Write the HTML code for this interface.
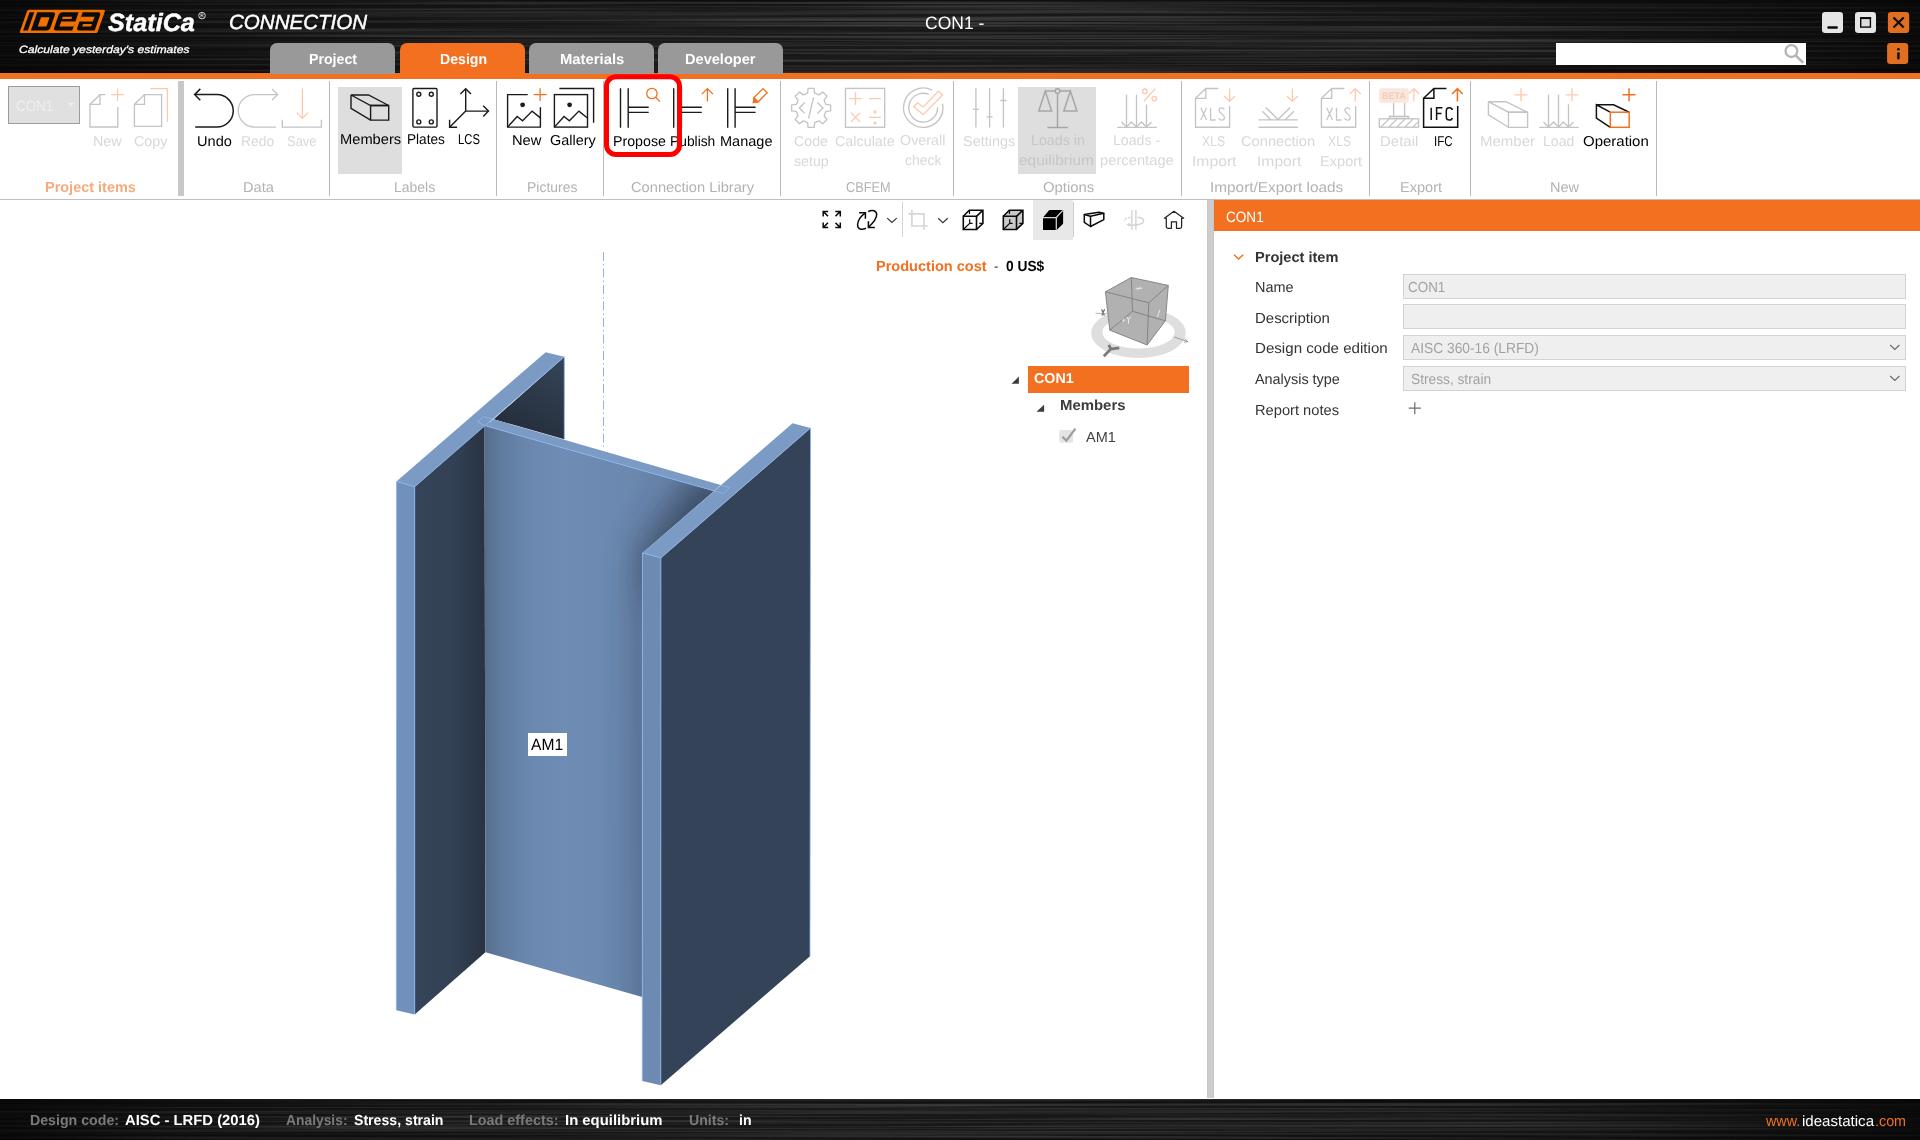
<!DOCTYPE html>
<html><head><meta charset="utf-8"><title>IDEA StatiCa Connection</title>
<style>
html,body{margin:0;padding:0;width:1920px;height:1140px;overflow:hidden;background:#fff;font-family:"Liberation Sans",sans-serif;}
.a{position:absolute;}
.ov{position:absolute;left:0;top:0;pointer-events:none;}
.t{position:absolute;white-space:nowrap;line-height:1;transform-origin:0 0;text-rendering:geometricPrecision;}
.t::before{content:'';display:inline-block;height:100px;width:0;}
#hdr{left:0;top:0;width:1920px;height:73px;background:linear-gradient(180deg,rgba(0,0,0,0.45) 0,rgba(0,0,0,0) 7px,rgba(0,0,0,0) 62px,rgba(0,0,0,0.4) 73px),linear-gradient(90deg,#080808 0,#0e0e0e 9%,#141414 22%,#181818 40%,#191919 50%,#181818 60%,#141414 78%,#0e0e0e 91%,#080808 100%);}
#obar{left:0;top:73px;width:1920px;height:6px;background:#f37021;}
#rib{left:0;top:79px;width:1920px;height:120px;background:#fff;}
#ribline{left:0;top:199px;width:1920px;height:1px;background:#bfbfbf;}
#stat{left:0;top:1099px;width:1920px;height:41px;background:linear-gradient(180deg,rgba(0,0,0,0.6) 0,rgba(0,0,0,0) 6px,rgba(0,0,0,0) 34px,rgba(0,0,0,0.4) 41px),linear-gradient(90deg,#080808 0,#0e0e0e 9%,#141414 22%,#171717 40%,#181818 50%,#171717 60%,#141414 78%,#0e0e0e 91%,#080808 100%);}
#split{left:1207px;top:200px;width:7px;height:898px;background:linear-gradient(90deg,#c2c2c2 0,#cdcdcd 1.2px,#cdcdcd 5.8px,#c2c2c2 7px);}
#phead{left:1214px;top:200px;width:706px;height:31px;background:#f37021;}
.tab{position:absolute;top:43px;width:125px;height:31px;border-radius:7px 7px 0 0;background:#999;}
.fld{position:absolute;left:1403px;width:503px;background:#efefef;border:1px solid #d3d3d3;box-sizing:border-box;}
.sep{position:absolute;top:81px;width:1px;height:115px;background:#b9b9b9;}
</style></head><body>
<div id="hdr" class="a"></div>
<svg class="a" style="left:0;top:0" width="1920" height="73" viewBox="0 0 1920 73"><defs>
<filter id="brush" x="0" y="0" width="100%" height="100%" color-interpolation-filters="sRGB"><feTurbulence type="fractalNoise" baseFrequency="0.0016 0.42" numOctaves="3" seed="11"/><feColorMatrix type="matrix" values="0 0 0 0 1  0 0 0 0 1  0 0 0 0 1  0.42 0 0 0 -0.155"/></filter>
<radialGradient id="hm" gradientUnits="userSpaceOnUse" cx="960" cy="40" r="1" gradientTransform="translate(960 40) scale(1060 120) translate(-960 -40)"><stop offset="0" stop-color="#fff"/><stop offset="0.55" stop-color="#bbb"/><stop offset="1" stop-color="#222"/></radialGradient>
<mask id="hmask"><rect width="1920" height="73" fill="url(#hm)"/></mask></defs>
<g mask="url(#hmask)"><rect width="1920" height="73" filter="url(#brush)"/></g></svg>
<div id="obar" class="a"></div>
<div id="rib" class="a"></div>
<div id="ribline" class="a"></div>
<div id="stat" class="a"></div>
<svg class="a" style="left:0;top:1099px" width="1920" height="41" viewBox="0 0 1920 41"><defs>
<filter id="brush2" x="0" y="0" width="100%" height="100%" color-interpolation-filters="sRGB"><feTurbulence type="fractalNoise" baseFrequency="0.0016 0.42" numOctaves="3" seed="5"/><feColorMatrix type="matrix" values="0 0 0 0 1  0 0 0 0 1  0 0 0 0 1  0.42 0 0 0 -0.155"/></filter>
<radialGradient id="hm2" gradientUnits="userSpaceOnUse" cx="960" cy="22" r="1" gradientTransform="translate(960 22) scale(1060 80) translate(-960 -22)"><stop offset="0" stop-color="#fff"/><stop offset="0.55" stop-color="#bbb"/><stop offset="1" stop-color="#222"/></radialGradient>
<mask id="hmask2"><rect width="1920" height="42" fill="url(#hm2)"/></mask></defs>
<g mask="url(#hmask2)"><rect width="1920" height="42" filter="url(#brush2)"/></g></svg>
<div id="split" class="a"></div>
<div id="phead" class="a"></div>
<div class="tab" style="left:270px"></div>
<div class="tab" style="left:400px;background:#f37021"></div>
<div class="tab" style="left:529px"></div>
<div class="tab" style="left:658px"></div>
<div class="a" style="left:178px;top:81px;width:6px;height:115px;background:#c8c8c8"></div>
<div class="sep" style="left:329px"></div>
<div class="sep" style="left:496px"></div>
<div class="sep" style="left:603px"></div>
<div class="sep" style="left:780px"></div>
<div class="sep" style="left:953px"></div>
<div class="sep" style="left:1181px"></div>
<div class="sep" style="left:1369px"></div>
<div class="sep" style="left:1470px"></div>
<div class="sep" style="left:1656px"></div>
<div class="a" style="left:338px;top:87px;width:64px;height:87px;background:#dedede"></div>
<div class="a" style="left:1018px;top:87px;width:78px;height:87px;background:#dedede"></div>
<div class="a" style="left:8px;top:86px;width:72px;height:38px;background:#e0e0e0;border:1px solid #9c9c9c;box-sizing:border-box"></div>
<div class="a" style="left:1556px;top:43px;width:250px;height:22px;background:#fff"></div>
<div class="a" style="left:1033px;top:200px;width:40px;height:40px;background:#e8e8e8"></div>
<div class="a" style="left:902px;top:202px;width:1px;height:35px;background:#d4d4d4"></div>
<div class="a" style="left:1028px;top:366px;width:161px;height:27px;background:#f37021"></div>
<div class="fld" style="top:274px;height:25px"></div>
<div class="fld" style="top:304px;height:25px"></div>
<div class="fld" style="top:335px;height:25px"></div>
<div class="fld" style="top:366px;height:25px"></div>
<svg class="ov" width="1920" height="1140" viewBox="0 0 1920 1140">
<defs>
<linearGradient id="gweb" gradientUnits="userSpaceOnUse" x1="484" y1="0" x2="643" y2="0">
 <stop offset="0" stop-color="#566c8c"/><stop offset="0.10" stop-color="#5f7a9d"/><stop offset="0.30" stop-color="#6b89b0"/><stop offset="0.5" stop-color="#6e8cb4"/><stop offset="0.8" stop-color="#6c8ab1"/><stop offset="1" stop-color="#6a86ad"/>
</linearGradient>
<linearGradient id="gshade" gradientUnits="userSpaceOnUse" x1="640" y1="560" x2="700" y2="490">
 <stop offset="0" stop-color="#3f4f68" stop-opacity="0"/><stop offset="0.45" stop-color="#3f4f68" stop-opacity="0.25"/><stop offset="1" stop-color="#3a4860" stop-opacity="0.85"/>
</linearGradient>
<linearGradient id="gleft" gradientUnits="userSpaceOnUse" x1="414" y1="0" x2="485" y2="0">
 <stop offset="0" stop-color="#354458"/><stop offset="0.55" stop-color="#334155"/><stop offset="1" stop-color="#283342"/>
</linearGradient>
<linearGradient id="gback" gradientUnits="userSpaceOnUse" x1="560" y1="360" x2="520" y2="440">
 <stop offset="0" stop-color="#354458"/><stop offset="1" stop-color="#232c39"/>
</linearGradient>
<clipPath id="cweb"><polygon points="484.6,425.6 714,490.9 642.5,553 642.3,997 485.4,952.2"/></clipPath>
<filter id="blur14" x="-50%" y="-50%" width="200%" height="200%"><feGaussianBlur stdDeviation="19"/></filter>
</defs>
<g id="hdricons">
<!-- IDEA logo -->
<g transform="translate(0,33.1) skewX(-19.2) translate(0,-33.1)">
<rect x="19.4" y="9.8" width="77.9" height="23.3" rx="1.5" fill="#f37000"/>
<rect x="22.3" y="12.3" width="4.7" height="18.3" fill="#0b0b0b"/>
<path d="M30,12.3 H45.5 Q48.6,12.3 48.6,15.3 V27.6 Q48.6,30.6 45.5,30.6 H30 Z" fill="#0b0b0b"/>
<rect x="35.5" y="17.2" width="8.6" height="9.2" fill="#f37000"/>
<path d="M55.3,12.3 H71.4 V21.5 H57.2 V23.9 H71.4 V26.4 H57.2 V23.9 H71.4 V30.6 H55.3 Q52.3,30.6 52.3,27.6 V15.3 Q52.3,12.3 55.3,12.3 Z" fill="#0b0b0b"/>
<rect x="57.1" y="16.7" width="9.4" height="2.4" fill="#f37000"/>
<rect x="57.1" y="23.9" width="14.3" height="2.5" fill="#f37000"/>
<path d="M75.4,12.3 H90.8 Q93.8,12.3 93.8,15.3 V30.6 H78.4 Q75.4,30.6 75.4,27.6 V21.4 H88.8 V19.1 H75.4 Z" fill="#0b0b0b"/>
<rect x="75.4" y="16.7" width="13.5" height="2.4" fill="#f37000"/>
<rect x="79.9" y="23.9" width="8.9" height="2.5" fill="#f37000"/>
</g>
<circle cx="202" cy="15.6" r="3.3" fill="none" stroke="#e6e6e6" stroke-width="0.9"/>
<path d="M200.9,17.3 V13.9 H202.3 Q203.2,13.9 203.2,14.8 Q203.2,15.6 202.3,15.6 H200.9 M202.3,15.6 L203.3,17.3" fill="none" stroke="#e6e6e6" stroke-width="0.7"/>
<!-- window buttons -->
<rect x="1822" y="12.1" width="21" height="20.8" rx="3.2" fill="#e6e6e6"/>
<rect x="1827.3" y="26.2" width="10.6" height="2.6" rx="1.2" fill="#0a0a0a"/>
<rect x="1855" y="12.1" width="21" height="20.8" rx="3.2" fill="#e6e6e6"/>
<rect x="1860.7" y="17.9" width="9.7" height="9.2" fill="#dcdcdc" stroke="#0a0a0a" stroke-width="1.4"/>
<rect x="1860" y="17.1" width="11.1" height="2" fill="#0a0a0a"/>
<rect x="1887.9" y="12.1" width="21.3" height="20.8" rx="3.2" fill="#e16f22"/>
<path d="M1893.5,17.6 L1903.7,27.5 M1903.7,17.6 L1893.5,27.5" stroke="#0a0a0a" stroke-width="2.1" fill="none"/>
<rect x="1887.1" y="43.1" width="21.1" height="20.9" rx="3.2" fill="#e16f22"/>
<rect x="1897.2" y="52.2" width="2.4" height="7.2" rx="1" fill="#0a0a0a"/>
<circle cx="1898.4" cy="49.2" r="1.3" fill="#0a0a0a"/>
<!-- search -->
<circle cx="1791.4" cy="51.1" r="5.9" fill="none" stroke="#b5b5b5" stroke-width="2.3"/>
<path d="M1795.6,55.4 L1803.2,62.8" stroke="#b5b5b5" stroke-width="2.6" fill="none"/>
</g>
<g id="rib1" fill="none" stroke-linecap="butt" stroke-linejoin="miter">
<!-- dropdown arrow -->
<polygon points="68,103 74.1,103 71.05,106.8" fill="#efefef" stroke="none"/>
<!-- New (disabled) -->
<g stroke="#c4c4c4" stroke-width="1.35">
<path d="M105.4,94.6 H100 L90,104.4 V127 H117.8 V107"/>
<path d="M100,94.6 V104.4 H90"/>
<path d="M144.5,94.6 H161.6 V126.3 H134.4 V104.4 Z"/>
<path d="M144.5,94.6 V104.4 H134.4"/>
</g>
<g stroke="#fbc9b0" stroke-width="1.3">
<path d="M111.2,94.7 H124 M117.5,88.4 V101"/>
<path d="M150.3,88.6 H167.4 V121.7"/>
</g>
<!-- Undo -->
<g stroke="#1a1a1a" stroke-width="1.5">
<path d="M195.2,127.1 H217 A16.25,16.25 0 0 0 217,94.6 H195"/>
<path d="M200.3,88.9 L194.6,94.6 L200.3,100.3"/>
</g>
<!-- Redo (disabled) -->
<g stroke="#c4c4c4" stroke-width="1.35">
<path d="M276,127.1 H254.5 A16.25,16.25 0 0 1 254.5,94.6 H277.3"/>
<path d="M272,88.9 L277.7,94.6 L272,100.3"/>
<path d="M282.3,119.7 V127.1 H321.4 V119.7"/>
</g>
<g stroke="#fbc9b0" stroke-width="1.3">
<path d="M302.4,88.5 V118.2 M296.8,112.8 L302.4,118.4 L308,112.8"/>
</g>
<!-- Members -->
<g stroke="#1a1a1a" stroke-width="1.4">
<path d="M351,95 H368.5 L388.7,105.5 H370.6 Z"/>
<path d="M370.6,105.5 H388.7 V120.1 H370.6 Z"/>
<path d="M351,95 V108.4 L370.6,120.1"/>
<!-- Plates -->
<rect x="412.9" y="88.5" width="24.1" height="38.6" rx="1"/>
<circle cx="418.8" cy="94.3" r="2"/><circle cx="431.3" cy="94.3" r="2"/>
<circle cx="418.8" cy="121.9" r="2"/><circle cx="431.3" cy="121.9" r="2"/>
<!-- LCS -->
<path d="M465.7,88.8 V111.1 H488.5 M465.7,111.1 L449.6,127.2"/>
<path d="M460.4,94.1 L465.7,88.8 L471,94.1 M483.2,105.8 L488.5,111.1 L483.2,116.4 M449.6,119.7 V127.2 H457.1"/>
<!-- Pictures New -->
<path d="M527.7,94.6 H507.6 V127.1 H540.4 V107.3"/>
<path d="M507.6,127.1 L517.2,116.5 L522.6,120.8 L532.1,111.1 L540.4,117.9"/>
<circle cx="522.6" cy="104.8" r="2.4" fill="#1a1a1a" stroke="none"/>
<!-- Gallery -->
<rect x="554.4" y="94.6" width="33.1" height="32.5"/>
<path d="M554.4,127.1 L564,116.5 L569.4,120.8 L578.9,111.1 L587.5,118"/>
<circle cx="569.6" cy="104.8" r="2.4" fill="#1a1a1a" stroke="none"/>
<path d="M559.4,88.5 H593.6 V122.7"/>
<!-- Propose / Publish / Manage -->
<path d="M620.5,88.2 V127.7 M628.2,88.2 V127.7 M628.2,107.2 H648.7 M628.2,112.4 H648.7"/>
<path d="M673.7,88.2 V127.7 M681.4,88.2 V127.7 M681.4,107.2 H701.8 M681.4,112.4 H701.8"/>
<path d="M727.7,88.2 V127.7 M735.1,88.2 V127.7 M735.1,107.2 H755.6 M735.1,112.4 H755.6"/>
</g>
<g stroke="#f37021" stroke-width="1.3">
<path d="M533.7,94.7 H546.6 M540.1,88.3 V101.1"/>
<circle cx="651.9" cy="93.5" r="5.2"/>
<path d="M655.6,97.2 L660,101.6"/>
<path d="M707.4,88.6 V101.6 M701.9,94.1 L707.4,88.6 L712.9,94.1"/>
<path d="M763.0,88.6 L767.2,92.8 L758.2,101.8 L753.4,102.4 L754.0,97.6 Z"/>
<path d="M754.0,97.6 L758.2,101.8 L753.4,102.4 Z" fill="#f37021"/>
</g>
</g>
<g id="rib2" fill="none">
<g stroke="#c4c4c4" stroke-width="1.35">
<path d="M807.6,93.1 L808.1,88.4 L814.1,88.4 L814.6,93.1 L819.1,94.9 L822.7,92.0 L827.0,96.3 L824.1,99.9 L825.9,104.4 L830.6,104.9 L830.6,110.9 L825.9,111.4 L824.1,115.9 L827.0,119.5 L822.7,123.8 L819.1,120.9 L814.6,122.7 L814.1,127.4 L808.1,127.4 L807.6,122.7 L803.1,120.9 L799.5,123.8 L795.2,119.5 L798.1,115.9 L796.3,111.4 L791.6,110.9 L791.6,104.9 L796.3,104.4 L798.1,99.9 L795.2,96.3 L799.5,92.0 L803.1,94.9 Z" stroke-linejoin="round"/>
<path d="M804.7,102.5 L799.3,107.9 L804.7,113.4 M813.6,97.3 L808.5,118.6 M817.4,102.5 L823,107.9 L817.4,113.4"/>
<rect x="845.5" y="88.4" width="39.2" height="38.9"/>
<path d="M932.1,90.1 A19.7,19.7 0 1 0 942.5,103.6"/>
<path d="M928.8,94.4 A14.4,14.4 0 1 0 937.6,107.2"/>
<!-- settings -->
<path d="M975.9,88.3 V127.6 M989.6,88.3 V127.6 M1003.4,88.3 V127.6 M972.9,109.3 H978.9 M986.6,116.8 H992.6 M1000.4,100.5 H1006.4"/>
<!-- loads % -->
<path d="M1117.3,127.4 H1156.9 M1126.5,94.5 V127 M1136.5,94.5 V127 M1146.5,104.6 V127"/>
<path d="M1121.5,122 L1126.5,127 L1131.5,122 L1136.5,127 L1141.5,122 L1146.5,127 L1151.5,122" />
</g>
<g stroke="#fbc9b0" stroke-width="1.3">
<path d="M849.3,98.6 H861.8 M855.5,92.3 V104.9 M869,98.6 H880.9 M850.9,112.7 L860.1,121.9 M860.1,112.7 L850.9,121.9 M869,117.3 H880.9"/>
<circle cx="875" cy="111.9" r="0.9" fill="#fbc9b0"/><circle cx="875" cy="123" r="0.9" fill="#fbc9b0"/>
<path d="M913.6,106.7 L917.6,102.8 L923.2,106.9 L938.4,91.2 L942.6,95 L923.2,114.6 Z"/>
<circle cx="1144.8" cy="91.3" r="2.3"/><circle cx="1154.3" cy="98.6" r="2.3"/>
<path d="M1155.3,88.6 L1143.8,101.3"/>
</g>
<!-- scales (on grey bg) -->
<g stroke="#a6a6a6" stroke-width="1.5">
<path d="M1057.5,93.4 V127.4 M1047.3,127.4 H1067.9 M1045.3,91.1 H1055.2 M1059.8,91.1 H1070.4"/>
<circle cx="1057.5" cy="91.1" r="2.3"/>
<path d="M1045.3,91.1 L1038.8,111.1 H1051.6 Z M1070.4,91.1 L1063.8,111.1 H1076.9 Z"/>
</g>
</g>
<g id="rib3" fill="none">
<g stroke="#c4c4c4" stroke-width="1.35">
<!-- XLS import doc -->
<path d="M1218.3,88.5 H1205.8 L1195.5,98.3 V127.2 H1229.6 V106.1"/>
<path d="M1205.8,88.5 V98.3 H1195.5"/>
<!-- XLS export doc -->
<path d="M1344.4,88.5 H1331.7 L1321.4,98.3 V127.2 H1355.7 V106.1"/>
<path d="M1331.7,88.5 V98.3 H1321.4"/>
<!-- connection import -->
<path d="M1258.5,119.9 H1297.8 M1258.5,127.2 H1297.8 M1265.8,107.4 L1278,119.5 L1290.2,107.4 M1262.4,111.3 L1270.8,119.7 M1285.4,119.7 L1293.9,111.3"/>
<!-- detail -->
<path d="M1393.6,102.7 V116.3 M1404.6,102.7 V116.3"/>
<rect x="1389.4" y="116.3" width="19.1" height="2"/>
<rect x="1379.3" y="118.8" width="39.3" height="8.4"/>
<path d="M1381,127 L1389,119 M1389,127 L1397,119 M1397,127 L1405,119 M1405,127 L1413,119 M1413,127 L1418.4,121.6" stroke-width="1.2"/>
<!-- member -->
<path d="M1488.4,101.7 H1505.8 L1527.6,112.2 H1508.5 Z"/>
<path d="M1508.5,112.2 H1527.6 V127.3 H1508.5 Z"/>
<path d="M1488.4,101.7 V114.8 L1508.5,127.3"/>
<!-- load -->
<path d="M1539.2,127.3 H1578.7 M1548.5,94.6 V127 M1558.5,94.6 V127 M1568.5,104.3 V127"/>
<path d="M1543.5,122 L1548.5,127 L1553.5,122 L1558.5,127 L1563.5,122 L1568.5,127 L1573.5,122"/>
</g>
<!-- XLS glyphs in docs -->
<g stroke="#c6c6c6" stroke-width="1.3">
<path d="M1200.8,107.8 L1206.6,120 M1206.6,107.8 L1200.8,120 M1210.6,107.8 V120 H1215.6 M1224.2,109.5 C1223.5,107.2 1219,107 1219,110.3 C1219,113.6 1224.5,113.8 1224.5,117.4 C1224.5,120.8 1219.3,120.8 1218.7,118.2"/>
<path d="M1326.7,107.8 L1332.5,120 M1332.5,107.8 L1326.7,120 M1336.5,107.8 V120 H1341.5 M1350.1,109.5 C1349.4,107.2 1344.9,107 1344.9,110.3 C1344.9,113.6 1350.4,113.8 1350.4,117.4 C1350.4,120.8 1345.2,120.8 1344.6,118.2"/>
</g>
<g stroke="#fbc9b0" stroke-width="1.3">
<path d="M1229.6,88.6 V101.4 M1224.2,96 L1229.6,101.4 L1235,96"/>
<path d="M1292.4,88.6 V101.4 M1287,96 L1292.4,101.4 L1297.8,96"/>
<path d="M1355.3,101.4 V88.6 M1349.9,94 L1355.3,88.6 L1360.7,94"/>
<path d="M1413.9,101.4 V88.6 M1408.5,94 L1413.9,88.6 L1419.3,94"/>
<path d="M1514.5,94.8 H1527.5 M1521,88.3 V101.3"/>
<path d="M1565.5,94.8 H1578.5 M1572,88.3 V101.3"/>
</g>
<rect x="1379.1" y="88.2" width="29.7" height="14.5" rx="2.5" fill="#fae6dd"/>
<!-- IFC -->
<g stroke="#111" stroke-width="1.5">
<path d="M1446.4,88.5 H1433.9 L1423.6,98.3 V127.2 H1457.7 V106.1"/>
<path d="M1433.9,88.5 V98.3 H1423.6"/>
<path d="M1431.2,107.8 V120 M1442.5,107.8 H1436.6 V120 M1436.6,113.6 H1441.5 M1452.3,110 C1451.8,107 1446.3,106.8 1446.3,110.8 V117 C1446.3,121 1451.8,120.8 1452.3,117.8" stroke-width="1.5"/>
<!-- operation -->
<path d="M1596.4,104.8 H1613.6 L1629.2,112.2 M1610.3,112.2 L1596.4,104.8 V118 L1610.3,127.3"/>
</g>
<g stroke="#f37021" stroke-width="1.5">
<path d="M1457.4,101.4 V88.6 M1452,94 L1457.4,88.6 L1462.8,94"/>
<rect x="1610.3" y="112.2" width="18.9" height="15.1"/>
<path d="M1622.5,94.8 H1635.5 M1629,88.3 V101.3"/>
</g>
</g>
<g id="viewbar" fill="none">
<g stroke="#0a0a0a" stroke-width="1.5">
<!-- fullscreen -->
<path d="M823.2,216.4 V211.4 H828.2 M823.2,211.4 L828,216.2"/>
<path d="M835.3,211.4 H840.3 V216.4 M840.3,211.4 L835.5,216.2"/>
<path d="M823.2,222.6 V227.6 H828.2 M823.2,227.6 L828,222.8"/>
<path d="M835.3,227.6 H840.3 V222.6 M840.3,227.6 L835.5,222.8"/>
<!-- rotate -->
<path d="M866,228.3 C861.5,230.3 857.3,229.2 857.6,224.6 C858,219.8 861.4,215.7 865.4,212.9"/>
<path d="M859.1,212.8 H865.4 V218.8"/>
<path d="M868.2,211.5 C872.5,209.3 876.6,210.6 876.7,214.6 C876.7,218.4 872.5,223.6 868.5,227.3"/>
<path d="M868.4,221.2 V227.4 H874.8"/>
</g>
<path d="M887.2,218.1 L891.9,222.5 L896.7,218.1" stroke="#333" stroke-width="1.2"/>
<path d="M938.2,218.2 L942.9,222.6 L947.7,218.2" stroke="#333" stroke-width="1.2"/>
<!-- crop (disabled) -->
<path d="M911.9,210.1 V226 H927.7 M908.3,213.8 H924 V229.7" stroke="#d6d6d6" stroke-width="1.7"/>
<!-- wire cube -->
<g id="wc" stroke="#0a0a0a" stroke-width="1.6" stroke-linejoin="miter">
<path d="M963.3,216.3 H976.5 V229.5 H963.3 Z"/>
<path d="M963.3,216.3 L969.3,210.2 H982.9 V223.3 L976.5,229.5 M976.5,216.3 L982.9,210.2"/>
<path d="M963.3,229.5 L969.7,223.3 H972.6 M969.7,223.3 V219.3 M969.5,211 V214 M979.3,223.3 H982.5" stroke-width="1.2"/>
</g>
<polygon points="1003.3,216.3 1009.3,210.2 1022.9,210.2 1022.9,223.3 1016.5,229.5 1003.3,229.5" fill="#c9c9c9"/>
<use href="#wc" x="40" y="0"/>
<!-- solid cube -->
<polygon points="1043,217.4 1049.3,210 1063.1,210 1063.1,223.7 1056.6,229.9 1043,229.9" fill="#000"/>
<path d="M1043,217.5 H1056.3 V229.8 M1056.3,217.5 L1062.8,210.4" stroke="#d6d6d6" stroke-width="1.25"/>
<line x1="1073.5" y1="202" x2="1073.5" y2="237" stroke="#cfcfcf" stroke-width="1"/>
<!-- beam -->
<g stroke="#0a0a0a" stroke-width="1.5" stroke-linejoin="round">
<path d="M1084.3,214.6 L1098.8,212.2 L1103.8,213.3 L1090.5,216.3 Z"/>
<path d="M1084.3,214.6 V222.3 L1090.5,226.5 V216.3"/>
<path d="M1103.8,213.3 V219.6 L1090.5,226.5"/>
</g>
<!-- rotate axis disabled -->
<g stroke="#d2d2d2" stroke-width="1.4">
<path d="M1131.9,210 V229.8 M1135.9,210 V229.8"/>
<path d="M1127.6,224.3 C1131,225.8 1143.6,225.2 1143.7,221.1 C1143.7,218.7 1140.5,217.6 1137.5,217.3" />
<path d="M1130.3,217.4 C1127,217.9 1124.4,219 1124.4,220.8" stroke-dasharray="2 1.2"/>
<polygon points="1126.4,224.6 1129.8,222.6 1129.8,226.4" fill="#d2d2d2" stroke="none"/>
</g>
<!-- home -->
<path d="M1164.4,218.2 L1174,211.3 L1183.7,218.2 H1181.6 V226.8 Q1181.6,228.3 1180.1,228.3 H1176.5 V221.9 H1171.4 V228.3 H1167.8 Q1166.3,228.3 1166.3,226.8 V218.2 Z" stroke="#222" stroke-width="1.25" stroke-linejoin="round"/>
</g>
<g id="model" shape-rendering="geometricPrecision">
<!-- centre line -->
<line x1="603.5" y1="252" x2="603.5" y2="447" stroke="#8db4ec" stroke-width="1" stroke-dasharray="9 3 1.5 3"/>
<!-- left flange: back part of inner face (visible above web) -->
<polygon points="564.3,356.8 564.3,439.2 493.7,419.3" fill="url(#gback)"/>
<!-- left flange inner face front part -->
<polygon points="414.7,486.7 484.6,425.6 485.4,952.2 414.7,1014.5" fill="url(#gleft)"/>
<!-- web front face -->
<polygon points="484.6,425.6 714,490.9 642.5,553 642.3,997 485.4,952.2" fill="url(#gweb)"/>
<g clip-path="url(#cweb)"><polygon points="700,470 775,478 705,560 656,600 654,1100 642,1100 642,553" fill="#2c384b" filter="url(#blur14)" opacity="0.8"/></g>
<!-- web top strip -->
<polygon points="493.7,419.3 720.7,485.1 714,490.9 484.6,425.6" fill="#7b9bc5"/>
<!-- left flange top face -->
<polygon points="545.6,352.2 564.3,356.8 414.7,486.7 396.4,481.5" fill="#7b9bc5"/>
<!-- left flange front face -->
<polygon points="396.4,481.5 414.7,486.7 414.7,1014.5 396.3,1010.2" fill="#7091bc"/>
<!-- right flange right face -->
<polygon points="660.9,557.9 810.5,428.1 810,956.3 660.8,1085.2" fill="#344358"/>
<!-- right flange top -->
<polygon points="792.6,423.2 810.5,428.1 660.9,557.9 642.5,553" fill="#7b9bc5"/>
<!-- right flange front -->
<polygon points="642.5,553 660.9,557.9 660.8,1085.2 642.3,1080.9" fill="#6d8ab2"/>
<!-- edge highlights -->
<g fill="none" stroke="#8ab6f2" stroke-width="0.9" stroke-opacity="0.9">
<polyline points="396.4,481.5 414.7,486.7 414.7,1014.5"/>
<polyline points="414.7,486.7 564.3,356.8 564.3,439"/>
<polyline points="642.5,553 660.9,557.9 660.8,1085.2"/>
<polyline points="660.9,557.9 810.5,428.1 810,956.3"/>
<line x1="642.5" y1="553" x2="642.3" y2="1080.9"/>
<polyline points="484.6,425.6 714,490.9 723.7,493.5 729.8,487.7 720.7,485.1"/>
<polyline points="484.6,425.6 477.3,421.8 483.4,416.8 493.7,419.3"/>
<line x1="396.4" y1="481.5" x2="396.3" y2="1010.2" stroke-opacity="0.5"/>
</g>
<rect x="528" y="733" width="39" height="23" fill="#fff"/>
</g>
<g id="navcube">
<path fill="#dedede" fill-rule="evenodd" d="M1091.2,333 a47.3,25 0 1 0 94.6,0 a47.3,25 0 1 0 -94.6,0 Z M1102.3,332.3 a36.2,16.2 0 1 0 72.4,0 a36.2,16.2 0 1 0 -72.4,0 Z"/>
<g stroke="#7f7f7f" stroke-width="0.9" stroke-linejoin="round">
<polygon points="1131.3,277.5 1168.3,285.4 1165.4,320.8 1147.1,345 1109.8,330.2 1105.4,291.8" fill="#b1b1b1"/>
<path d="M1105.4,291.8 L1148.8,302.8 L1168.3,285.4 M1148.8,302.8 L1147.1,345 M1131.3,277.5 L1132.5,311.3 L1109.8,330.2 M1132.5,311.3 L1165.4,320.8" fill="none"/>
</g>
<g fill="none" stroke="#f4f4f4" stroke-width="0.9">
<path d="M1126.6,317 L1128.5,319.6 L1130.6,316.6 M1128.5,319.6 V323.5"/>
<path d="M1123.6,318.5 V322 M1122,320.2 H1125.2" stroke-width="0.7"/>
<path d="M1135.5,288.3 H1142.5 M1137,290.2 L1140.8,287" stroke-width="0.8"/>
<path d="M1159.8,310 L1157.5,317" stroke-width="0.8"/>
</g>
<path d="M1103.8,356.3 L1110.8,349 L1119.3,347.8 M1110.8,349 L1108.8,344.8" stroke="#7a7a7a" stroke-width="2.8" fill="none"/>
<path d="M1101.6,309.5 L1104.4,315.5 M1104.6,309.2 L1101.8,315.6" stroke="#6f6f6f" stroke-width="1.3" fill="none"/>
<path d="M1095.5,313.4 H1107" stroke="#9a9a9a" stroke-width="0.7"/>
<path d="M1174.3,337 L1187.6,341.6 M1184.6,338.8 L1187.8,341.6 L1184,342.3" stroke="#8a8a8a" stroke-width="0.8" fill="none"/>
</g>
<g id="panel" fill="none">
<path d="M1234,254.7 L1238.6,259.1 L1243.2,254.7" stroke="#f37021" stroke-width="1.4"/>
<path d="M1890.2,345 L1894.8,349.4 L1899.4,345" stroke="#6a6a6a" stroke-width="1.2"/>
<path d="M1890.2,376 L1894.8,380.4 L1899.4,376" stroke="#6a6a6a" stroke-width="1.2"/>
<path d="M1408.8,408.2 H1420.8 M1414.8,402.2 V414.2" stroke="#6a6a6a" stroke-width="1.2"/>
<!-- tree -->
<polygon points="1011.5,383.7 1018.9,383.7 1018.9,376.6" fill="#3c3c3c"/>
<polygon points="1036.4,411.8 1044.1,411.8 1044.1,404.7" fill="#3c3c3c"/>
<rect x="1059.2" y="430.1" width="13.8" height="12.6" rx="2" fill="#e4e4e4"/>
<path d="M1062.4,436.8 L1066.4,440.6 L1075.4,428.6" stroke="#9c9c9c" stroke-width="2.2"/>
</g>
</svg>
<div class="t" style="left:107.90px;top:-69.20px;font-size:25px;color:#fff;font-weight:700;font-style:italic;transform:scaleX(1.0087);-webkit-text-stroke:0.45px #fff;">StatiCa</div>
<div class="t" style="left:229.00px;top:-71.40px;font-size:20.5px;color:#fff;font-style:italic;transform:scaleX(1.0025);-webkit-text-stroke:0.45px #fff;">CONNECTION</div>
<div class="t" style="left:19.30px;top:-46.80px;font-size:10.6px;color:#fff;font-style:italic;transform:scaleX(1.1473);-webkit-text-stroke:0.3px #fff;">Calculate yesterday's estimates</div>
<div class="t" style="left:925.00px;top:-71.00px;font-size:18px;color:#fff;transform:scaleX(0.9721);">CON1 -</div>
<div class="t" style="left:308.60px;top:-36.10px;font-size:14.6px;color:#fff;font-weight:700;transform:scaleX(0.9697);">Project</div>
<div class="t" style="left:439.60px;top:-36.10px;font-size:14.6px;color:#fff;font-weight:700;transform:scaleX(0.9671);">Design</div>
<div class="t" style="left:559.50px;top:-36.10px;font-size:14.6px;color:#fff;font-weight:700;transform:scaleX(1.0158);">Materials</div>
<div class="t" style="left:685.40px;top:-36.10px;font-size:14.6px;color:#fff;font-weight:700;transform:scaleX(0.9986);">Developer</div>
<div class="t" style="left:15.60px;top:10.90px;font-size:15px;color:#eeeeee;transform:scaleX(0.8945);">CON1</div>
<div class="t" style="left:92.60px;top:45.50px;font-size:14.3px;color:#d8d8d8;transform:scaleX(1.0035);">New</div>
<div class="t" style="left:134.40px;top:45.50px;font-size:14.3px;color:#d8d8d8;transform:scaleX(1.0030);">Copy</div>
<div class="t" style="left:44.60px;top:91.90px;font-size:14.6px;color:#f7aa7d;font-weight:700;transform:scaleX(0.9913);">Project items</div>
<div class="t" style="left:196.50px;top:45.50px;font-size:14.3px;color:#000;transform:scaleX(1.0205);">Undo</div>
<div class="t" style="left:241.20px;top:45.50px;font-size:14.3px;color:#d8d8d8;transform:scaleX(0.9678);">Redo</div>
<div class="t" style="left:286.80px;top:45.50px;font-size:14.3px;color:#d8d8d8;transform:scaleX(0.9049);">Save</div>
<div class="t" style="left:242.60px;top:91.90px;font-size:14.3px;color:#b2b2b2;transform:scaleX(1.0215);">Data</div>
<div class="t" style="left:339.60px;top:44.30px;font-size:14.3px;color:#000;transform:scaleX(1.0268);">Members</div>
<div class="t" style="left:406.70px;top:44.30px;font-size:14.3px;color:#000;transform:scaleX(0.9535);">Plates</div>
<div class="t" style="left:458.40px;top:44.30px;font-size:14.3px;color:#000;transform:scaleX(0.7878);">LCS</div>
<div class="t" style="left:393.50px;top:91.90px;font-size:14.3px;color:#b2b2b2;transform:scaleX(0.9775);">Labels</div>
<div class="t" style="left:512.40px;top:45.40px;font-size:14.3px;color:#000;transform:scaleX(1.0279);">New</div>
<div class="t" style="left:550.30px;top:45.40px;font-size:14.3px;color:#000;transform:scaleX(1.0088);">Gallery</div>
<div class="t" style="left:526.50px;top:91.90px;font-size:14.3px;color:#b2b2b2;transform:scaleX(0.9758);">Pictures</div>
<div class="t" style="left:612.60px;top:45.70px;font-size:14.3px;color:#000;transform:scaleX(0.9934);">Propose</div>
<div class="t" style="left:670.00px;top:45.70px;font-size:14.3px;color:#000;transform:scaleX(0.9659);">Publish</div>
<div class="t" style="left:720.00px;top:45.70px;font-size:14.3px;color:#000;transform:scaleX(1.0155);">Manage</div>
<div class="t" style="left:631.20px;top:91.90px;font-size:14.3px;color:#b2b2b2;transform:scaleX(1.0254);">Connection Library</div>
<div class="t" style="left:793.50px;top:45.70px;font-size:14.3px;color:#d8d8d8;transform:scaleX(0.9942);">Code</div>
<div class="t" style="left:793.50px;top:65.60px;font-size:14.3px;color:#d8d8d8;transform:scaleX(0.9943);">setup</div>
<div class="t" style="left:834.70px;top:45.70px;font-size:14.3px;color:#d8d8d8;transform:scaleX(1.0034);">Calculate</div>
<div class="t" style="left:899.50px;top:44.80px;font-size:14.3px;color:#d8d8d8;transform:scaleX(1.0044);">Overall</div>
<div class="t" style="left:904.90px;top:64.70px;font-size:14.3px;color:#d8d8d8;transform:scaleX(0.9733);">check</div>
<div class="t" style="left:845.70px;top:91.90px;font-size:14.3px;color:#b2b2b2;transform:scaleX(0.8911);">CBFEM</div>
<div class="t" style="left:962.50px;top:45.50px;font-size:14.3px;color:#d8d8d8;transform:scaleX(1.0126);">Settings</div>
<div class="t" style="left:1030.60px;top:44.80px;font-size:14.3px;color:#c6c6c6;transform:scaleX(0.9954);">Loads in</div>
<div class="t" style="left:1019.40px;top:64.60px;font-size:14.3px;color:#c6c6c6;transform:scaleX(1.0846);">equilibrium</div>
<div class="t" style="left:1112.80px;top:44.80px;font-size:14.3px;color:#d8d8d8;transform:scaleX(0.9895);">Loads -</div>
<div class="t" style="left:1099.60px;top:64.60px;font-size:14.3px;color:#d8d8d8;transform:scaleX(1.0314);">percentage</div>
<div class="t" style="left:1042.50px;top:91.90px;font-size:14.3px;color:#b2b2b2;transform:scaleX(1.0406);">Options</div>
<div class="t" style="left:1202.20px;top:45.80px;font-size:14.3px;color:#d8d8d8;transform:scaleX(0.8540);">XLS</div>
<div class="t" style="left:1192.40px;top:65.70px;font-size:14.3px;color:#d8d8d8;transform:scaleX(1.0974);">Import</div>
<div class="t" style="left:1240.50px;top:45.80px;font-size:14.3px;color:#d8d8d8;transform:scaleX(1.0256);">Connection</div>
<div class="t" style="left:1256.60px;top:65.70px;font-size:14.3px;color:#d8d8d8;transform:scaleX(1.0949);">Import</div>
<div class="t" style="left:1328.30px;top:45.80px;font-size:14.3px;color:#d8d8d8;transform:scaleX(0.8540);">XLS</div>
<div class="t" style="left:1319.70px;top:65.70px;font-size:14.3px;color:#d8d8d8;transform:scaleX(1.0206);">Export</div>
<div class="t" style="left:1210.30px;top:91.70px;font-size:14.3px;color:#b2b2b2;transform:scaleX(1.0750);">Import/Export loads</div>
<div class="t" style="left:1381.90px;top:-0.90px;font-size:9.4px;color:#f2cbb6;font-weight:700;transform:scaleX(0.9558);">BETA</div>
<div class="t" style="left:1379.90px;top:45.80px;font-size:14.3px;color:#d8d8d8;transform:scaleX(1.0479);">Detail</div>
<div class="t" style="left:1433.80px;top:45.80px;font-size:14.3px;color:#000;transform:scaleX(0.8113);">IFC</div>
<div class="t" style="left:1399.90px;top:91.70px;font-size:14.3px;color:#b2b2b2;transform:scaleX(1.0181);">Export</div>
<div class="t" style="left:1479.70px;top:45.70px;font-size:14.3px;color:#d8d8d8;transform:scaleX(1.0486);">Member</div>
<div class="t" style="left:1542.90px;top:45.70px;font-size:14.3px;color:#d8d8d8;transform:scaleX(0.9843);">Load</div>
<div class="t" style="left:1582.60px;top:45.70px;font-size:14.3px;color:#000;transform:scaleX(1.0478);">Operation</div>
<div class="t" style="left:1549.70px;top:91.70px;font-size:14.3px;color:#b2b2b2;transform:scaleX(1.0174);">New</div>
<div class="t" style="left:876.30px;top:171.30px;font-size:14.6px;color:#f37021;font-weight:700;transform:scaleX(0.9964);">Production cost</div>
<div class="t" style="left:994.30px;top:171.30px;font-size:14.6px;color:#333;transform:scaleX(0.8866);">-</div>
<div class="t" style="left:1005.50px;top:171.30px;font-size:14.6px;color:#000;font-weight:700;transform:scaleX(0.9433);">0 US$</div>
<div class="t" style="left:1034.00px;top:282.70px;font-size:14.2px;color:#fff;font-weight:700;transform:scaleX(1.0063);">CON1</div>
<div class="t" style="left:1059.60px;top:310.40px;font-size:14.6px;color:#3c3c3c;font-weight:700;transform:scaleX(1.0218);">Members</div>
<div class="t" style="left:1086.20px;top:341.70px;font-size:14.6px;color:#404040;transform:scaleX(0.9933);">AM1</div>
<div class="t" style="left:530.90px;top:649.70px;font-size:16.3px;color:#000;transform:scaleX(0.9582);z-index:3;">AM1</div>
<div class="t" style="left:1226.20px;top:122.20px;font-size:15px;color:#fff;transform:scaleX(0.9041);">CON1</div>
<div class="t" style="left:1254.80px;top:162.00px;font-size:14.6px;color:#333;font-weight:700;transform:scaleX(0.9982);">Project item</div>
<div class="t" style="left:1254.80px;top:192.40px;font-size:14.6px;color:#333;transform:scaleX(0.9910);">Name</div>
<div class="t" style="left:1254.80px;top:222.70px;font-size:14.6px;color:#333;transform:scaleX(1.0253);">Description</div>
<div class="t" style="left:1254.80px;top:253.00px;font-size:14.6px;color:#333;transform:scaleX(1.0355);">Design code edition</div>
<div class="t" style="left:1254.80px;top:283.60px;font-size:14.6px;color:#333;transform:scaleX(0.9860);">Analysis type</div>
<div class="t" style="left:1254.80px;top:314.50px;font-size:14.6px;color:#333;transform:scaleX(1.0048);">Report notes</div>
<div class="t" style="left:1408.20px;top:192.40px;font-size:14.6px;color:#a2a2a2;transform:scaleX(0.9199);">CON1</div>
<div class="t" style="left:1411.40px;top:253.00px;font-size:14.6px;color:#a2a2a2;transform:scaleX(0.9439);">AISC 360-16 (LRFD)</div>
<div class="t" style="left:1411.40px;top:283.60px;font-size:14.6px;color:#a2a2a2;transform:scaleX(0.9401);">Stress, strain</div>
<div class="t" style="left:30.00px;top:1025.00px;font-size:14.6px;color:#7a7a7a;font-weight:700;transform:scaleX(0.9711);">Design code:</div>
<div class="t" style="left:125.00px;top:1025.00px;font-size:14.6px;color:#fff;font-weight:700;transform:scaleX(1.0147);">AISC - LRFD (2016)</div>
<div class="t" style="left:286.00px;top:1025.00px;font-size:14.6px;color:#7a7a7a;font-weight:700;transform:scaleX(0.9476);">Analysis:</div>
<div class="t" style="left:354.00px;top:1025.00px;font-size:14.6px;color:#fff;font-weight:700;transform:scaleX(0.9676);">Stress, strain</div>
<div class="t" style="left:469.00px;top:1025.00px;font-size:14.6px;color:#7a7a7a;font-weight:700;transform:scaleX(0.9851);">Load effects:</div>
<div class="t" style="left:565.00px;top:1025.00px;font-size:14.6px;color:#fff;font-weight:700;transform:scaleX(1.0188);">In equilibrium</div>
<div class="t" style="left:688.50px;top:1025.00px;font-size:14.6px;color:#7a7a7a;font-weight:700;transform:scaleX(0.9674);">Units:</div>
<div class="t" style="left:739.00px;top:1025.00px;font-size:14.6px;color:#fff;font-weight:700;transform:scaleX(0.9653);">in</div>
<div class="t" style="left:1766.35px;top:1025.50px;font-size:15px;color:#f37021;transform:scaleX(0.9554);">www.</div>
<div class="t" style="left:1801.50px;top:1025.50px;font-size:15px;color:#fff;transform:scaleX(1.0042);">ideastatica</div>
<div class="t" style="left:1874.50px;top:1025.50px;font-size:15px;color:#f37021;transform:scaleX(0.9538);">.com</div>
<svg class="ov" width="1920" height="1140" viewBox="0 0 1920 1140">
<rect x="606.5" y="76.7" width="73" height="77.9" rx="9.5" fill="none" stroke="#fe0000" stroke-width="5"/>
</svg>
</body></html>
